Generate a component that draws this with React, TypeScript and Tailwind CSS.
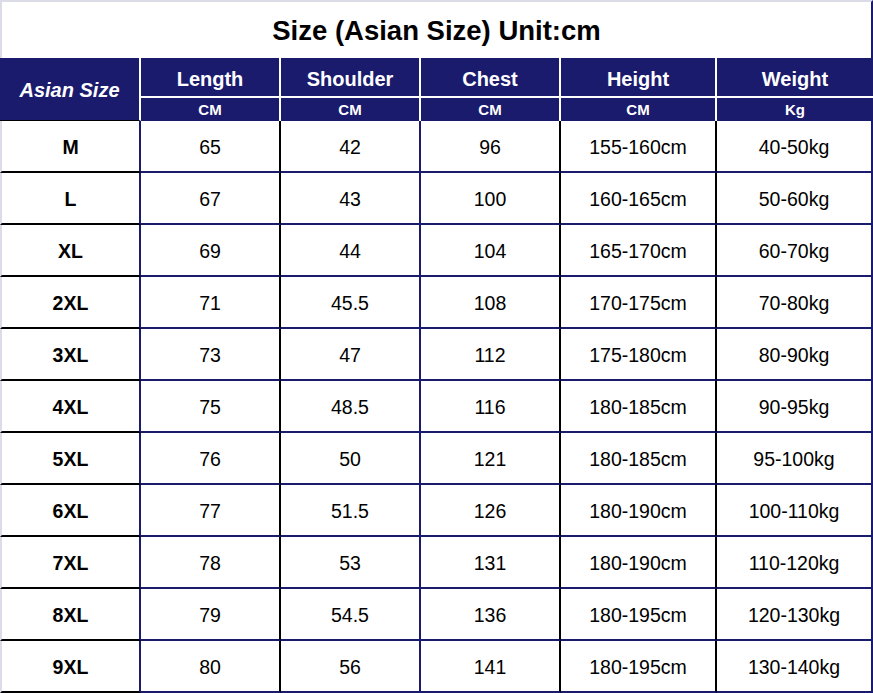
import React from "react";

const NAVY = "#1b1b6e";

type Row = [string, string, string, string, string, string];

const rows: Row[] = [
  ["M", "65", "42", "96", "155-160cm", "40-50kg"],
  ["L", "67", "43", "100", "160-165cm", "50-60kg"],
  ["XL", "69", "44", "104", "165-170cm", "60-70kg"],
  ["2XL", "71", "45.5", "108", "170-175cm", "70-80kg"],
  ["3XL", "73", "47", "112", "175-180cm", "80-90kg"],
  ["4XL", "75", "48.5", "116", "180-185cm", "90-95kg"],
  ["5XL", "76", "50", "121", "180-185cm", "95-100kg"],
  ["6XL", "77", "51.5", "126", "180-190cm", "100-110kg"],
  ["7XL", "78", "53", "131", "180-190cm", "110-120kg"],
  ["8XL", "79", "54.5", "136", "180-195cm", "120-130kg"],
  ["9XL", "80", "56", "141", "180-195cm", "130-140kg"],
];

const columns = [
  { title: "Length", unit: "CM", w: "w-[140px]" },
  { title: "Shoulder", unit: "CM", w: "w-[140px]" },
  { title: "Chest", unit: "CM", w: "w-[140px]" },
  { title: "Height", unit: "CM", w: "w-[156px]" },
  { title: "Weight", unit: "Kg", w: "w-[156px]" },
];

// colour of the vertical line on the right of each data cell
const rightLine = [
  "border-r-black",
  "border-r-[#1b1b6e]",
  "border-r-black",
  "border-r-black",
  "border-r-[#1b1b6e]",
];

export default function App() {
  return (
    <div
      className="w-[873px] h-[693px] bg-white overflow-hidden flex flex-col"
      style={{ fontFamily: '"Liberation Sans", Arial, sans-serif' }}
    >
      {/* Title */}
      <div className="h-[58px] shrink-0 flex items-center justify-center border-t-2 border-l-2 border-r-2 border-t-[#dcdce8] border-l-[#dcdce8] border-r-[#1b1b6e]">
        <h1 className="text-[27.5px] font-bold text-black leading-none pt-[1px]">
          Size (Asian Size) Unit:cm
        </h1>
      </div>

      {/* Header */}
      <div className="flex h-[63px] shrink-0" style={{ backgroundColor: NAVY }}>
        <div className="w-[141px] flex items-center justify-center border-r-2 border-r-white border-b border-b-black">
          <span className="text-white font-bold italic text-[20px] pt-[2px]">Asian Size</span>
        </div>
        {columns.map((c, i) => (
          <div
            key={c.title}
            className={`${c.w} flex flex-col ${i < columns.length - 1 ? "border-r-2 border-r-white" : ""}`}
          >
            <div className="h-[40px] flex items-center justify-center border-b-2 border-b-white">
              <span className="text-white font-bold text-[20px] pt-[3px]">{c.title}</span>
            </div>
            <div className="flex-1 flex items-center justify-center">
              <span className="text-white font-bold text-[15px] leading-none">{c.unit}</span>
            </div>
          </div>
        ))}
      </div>

      {/* Body */}
      <div className="flex flex-col">
        {rows.map((r) => (
          <div key={r[0]} className="flex h-[52px] shrink-0">
            <div className="w-[141px] flex items-center justify-center border-l-2 border-l-[#dcdce8] border-r-2 border-r-[#1b1b6e] border-b-2 border-b-black">
              <span className="font-bold text-[19.5px] text-black pt-[3px]">{r[0]}</span>
            </div>
            {r.slice(1).map((v, i) => (
              <div
                key={i}
                className={`${columns[i].w} flex items-center justify-center border-b-2 border-b-[#1b1b6e] border-r-2 ${rightLine[i]}`}
              >
                <span className="text-[19.5px] text-black pt-[3px]">{v}</span>
              </div>
            ))}
          </div>
        ))}
      </div>
    </div>
  );
}
